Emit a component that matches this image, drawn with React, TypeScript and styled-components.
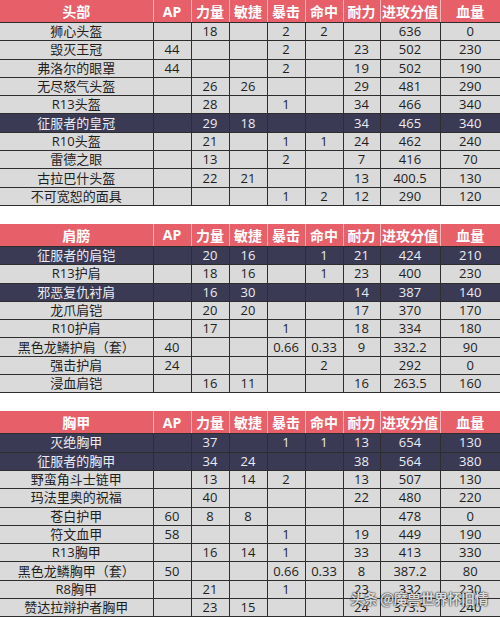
import React from "react";
import styled, { createGlobalStyle } from "styled-components";

const GlobalStyle = createGlobalStyle`
  html, body { margin: 0; padding: 0; background: #ffffff; }
  body { font-family: "Open Sans", "Noto Sans CJK SC", sans-serif; }
`;

const Page = styled.div`
  position: relative;
  width: 500px;
  height: 618px;
  overflow: hidden;
  display: flex;
  flex-direction: column;
  gap: 18px;
`;

const Table = styled.table`
  width: 500px;
  border-collapse: collapse;
  table-layout: fixed;
  font-family: "Open Sans", "Noto Sans CJK SC", sans-serif;
  font-size: 13px;
`;

const HeadCell = styled.th`
  height: 22px;
  padding: 0;
  background: #e65f69;
  color: #ffffff;
  font-weight: 700;
  font-size: 14px;
  text-align: center;
  border-right: 1px solid #f3b7bc;
  border-bottom: 1px solid #2e2e2e;
  &:last-child { border-right: none; }
`;

const Row = styled.tr<{ $dark?: boolean }>`
  height: 18.3px;
  background: ${(p) => (p.$dark ? "#3a3a54" : "#dadada")};
  color: ${(p) => (p.$dark ? "#ececf2" : "#1e1e1e")};
`;

const Cell = styled.td`
  padding: 0;
  line-height: 17px;
  text-align: center;
  white-space: nowrap;
  border-right: 1px solid #2e2e2e;
  border-bottom: 1px solid #2e2e2e;
  &:last-child { border-right: none; }
`;

const Watermark = styled.div`
  position: absolute;
  right: 12px;
  bottom: 10px;
  font-family: "Noto Sans CJK SC", sans-serif;
  font-size: 14px;
  font-weight: 700;
  color: rgba(255, 255, 255, 0.85);
  text-shadow: 0 0 2px rgba(0, 0, 0, 0.8), 0 0 1px rgba(0, 0, 0, 0.9);
  letter-spacing: -0.5px;
`;

type Item = { name: string; dark?: boolean; v: (string | number)[] };
type Section = { title: string; items: Item[] };

const widths = [153, 38, 38, 38, 38, 38, 37, 60, 60];
const cols = ["AP", "力量", "敏捷", "暴击", "命中", "耐力", "进攻分值", "血量"];

const sections: Section[] = [
  {
    title: "头部",
    items: [
      { name: "狮心头盔", v: ["", 18, "", 2, 2, "", 636, 0] },
      { name: "毁灭王冠", v: [44, "", "", 2, "", 23, 502, 230] },
      { name: "弗洛尔的眼罩", v: [44, "", "", 2, "", 19, 502, 190] },
      { name: "无尽怒气头盔", v: ["", 26, 26, "", "", 29, 481, 290] },
      { name: "R13头盔", v: ["", 28, "", 1, "", 34, 466, 340] },
      { name: "征服者的皇冠", dark: true, v: ["", 29, 18, "", "", 34, 465, 340] },
      { name: "R10头盔", v: ["", 21, "", 1, 1, 24, 462, 240] },
      { name: "雷德之眼", v: ["", 13, "", 2, "", 7, 416, 70] },
      { name: "古拉巴什头盔", v: ["", 22, 21, "", "", 13, "400.5", 130] },
      { name: "不可宽恕的面具", v: ["", "", "", 1, 2, 12, 290, 120] },
    ],
  },
  {
    title: "肩膀",
    items: [
      { name: "征服者的肩铠", dark: true, v: ["", 20, 16, "", 1, 21, 424, 210] },
      { name: "R13护肩", v: ["", 18, 16, "", 1, 23, 400, 230] },
      { name: "邪恶复仇衬肩", dark: true, v: ["", 16, 30, "", "", 14, 387, 140] },
      { name: "龙爪肩铠", v: ["", 20, 20, "", "", 17, 370, 170] },
      { name: "R10护肩", v: ["", 17, "", 1, "", 18, 334, 180] },
      { name: "黑色龙鳞护肩（套）", v: [40, "", "", "0.66", "0.33", 9, "332.2", 90] },
      { name: "强击护肩", v: [24, "", "", "", 2, "", 292, 0] },
      { name: "浸血肩铠", v: ["", 16, 11, "", "", 16, "263.5", 160] },
    ],
  },
  {
    title: "胸甲",
    items: [
      { name: "灭绝胸甲", dark: true, v: ["", 37, "", 1, 1, 13, 654, 130] },
      { name: "征服者的胸甲", dark: true, v: ["", 34, 24, "", "", 38, 564, 380] },
      { name: "野蛮角斗士链甲", v: ["", 13, 14, 2, "", 13, 507, 130] },
      { name: "玛法里奥的祝福", v: ["", 40, "", "", "", 22, 480, 220] },
      { name: "苍白护甲", v: [60, 8, 8, "", "", "", 478, 0] },
      { name: "符文血甲", v: [58, "", "", 1, "", 19, 449, 190] },
      { name: "R13胸甲", v: ["", 16, 14, 1, "", 33, 413, 330] },
      { name: "黑色龙鳞胸甲（套）", v: [50, "", "", "0.66", "0.33", 8, "387.2", 80] },
      { name: "R8胸甲", v: ["", 21, "", 1, "", 23, 332, 230] },
      { name: "赞达拉辩护者胸甲", v: ["", 23, 15, "", "", 24, "373.5", 240] },
    ],
  },
];

function StatTable({ section }: { section: Section }) {
  return (
    <Table>
      <colgroup>
        {widths.map((w, i) => (
          <col key={i} style={{ width: w }} />
        ))}
      </colgroup>
      <thead>
        <tr>
          <HeadCell>{section.title}</HeadCell>
          {cols.map((c) => (
            <HeadCell key={c}>{c}</HeadCell>
          ))}
        </tr>
      </thead>
      <tbody>
        {section.items.map((it) => (
          <Row key={it.name} $dark={it.dark}>
            <Cell>{it.name}</Cell>
            {it.v.map((x, i) => (
              <Cell key={i}>{x}</Cell>
            ))}
          </Row>
        ))}
      </tbody>
    </Table>
  );
}

export default function App() {
  return (
    <>
      <GlobalStyle />
      <Page>
        {sections.map((s) => (
          <StatTable key={s.title} section={s} />
        ))}
        <Watermark>头条 @魔兽世界怀旧情</Watermark>
      </Page>
    </>
  );
}
